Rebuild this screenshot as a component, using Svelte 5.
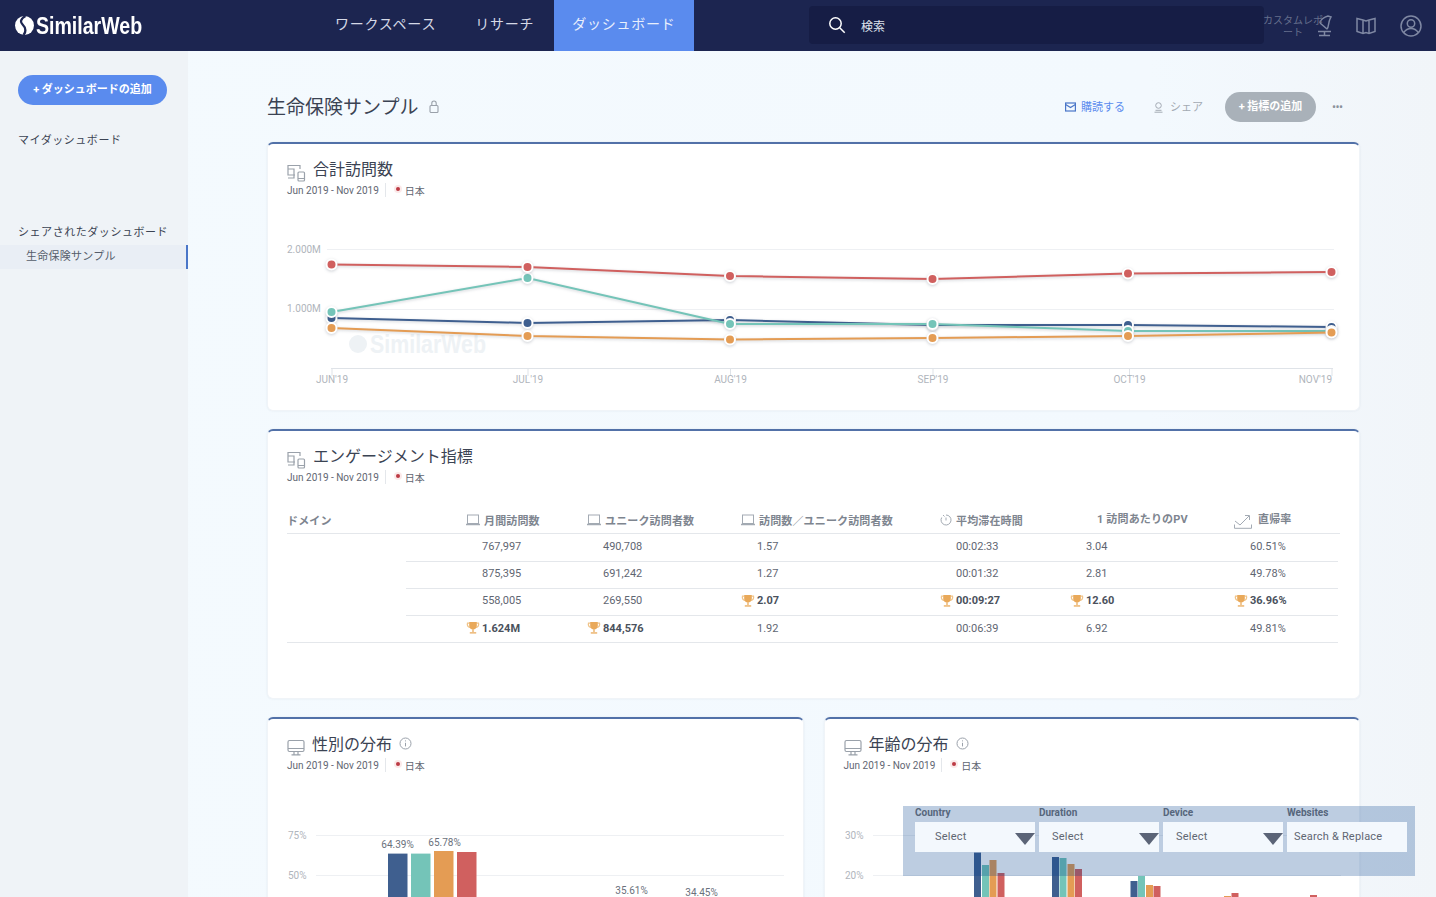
<script>
  const xs = [331.5, 527.5, 730, 932.5, 1128, 1331.5]
  const series = [
    { c: '#3f5f8f', y: [318, 323, 320, 325, 325, 327] },
    { c: '#74c4b8', y: [312, 278, 324, 324, 331, 331] },
    { c: '#d0605f', y: [264.5, 267, 276, 279, 273.5, 272] },
    { c: '#e49c54', y: [328, 336, 339.5, 338, 336, 332.5] }
  ]
  const months = ["JUN'19", "JUL'19", "AUG'19", "SEP'19", "OCT'19", "NOV'19"]
  const monthAt = [332, 528, 730.5, 933, 1129.5]
  const cols = [
    { label: '月間訪問数', icon: 'lap' },
    { label: 'ユニーク訪問者数', icon: 'lap' },
    { label: '訪問数／ユニーク訪問者数', icon: 'lap' },
    { label: '平均滞在時間', icon: 'clock' },
    { label: '1 訪問あたりのPV', icon: '' },
    { label: '直帰率', icon: 'bounce' }
  ]
  // a leading * marks the winner of the column
  const rows = [
    ['767,997', '490,708', '1.57', '00:02:33', '3.04', '60.51%'],
    ['875,395', '691,242', '1.27', '00:01:32', '2.81', '49.78%'],
    ['558,005', '269,550', '*2.07', '*00:09:27', '*12.60', '*36.96%'],
    ['*1.624M', '*844,576', '1.92', '00:06:39', '6.92', '49.81%']
  ]
  const genderBars = [
    [388, 853.6, '#3f5f8f'], [411, 853.6, '#74c4b8'], [434, 851, '#e49c54'], [457, 852, '#d0605f']
  ]
  const ageBars = [
    [973, 852.6, '#3f5f8f'], [981, 865, '#74c4b8'], [988.5, 860, '#e49c54'], [996.5, 873, '#d0605f'],
    [1051, 857, '#3f5f8f'], [1058.5, 858, '#74c4b8'], [1066.5, 864, '#e49c54'], [1074, 869, '#d0605f'],
    [1129.5, 881, '#3f5f8f'], [1137, 876, '#74c4b8'], [1145, 885, '#e49c54'], [1152.5, 886, '#d0605f'],
    [1223, 896, '#e49c54'], [1230.5, 893, '#d0605f'], [1309, 895, '#d0605f']
  ]
  const filters = [
    { label: 'Country', text: 'Select', arrow: true, pad: 20 },
    { label: 'Duration', text: 'Select', arrow: true, pad: 13 },
    { label: 'Device', text: 'Select', arrow: true, pad: 13 },
    { label: 'Websites', text: 'Search & Replace', arrow: false, pad: 7 }
  ]
</script>

{#snippet mark(size, color, cut)}
  <svg class="mark" width={size} height={size} viewBox="0 0 20 20">
    <circle cx="10" cy="10" r="10" fill={color} />
    <path d="M11 0C6 3 5 6 8 9c3 3 4 7 1 11" fill="none" stroke={cut} stroke-width="2.4" />
  </svg>
{/snippet}

{#snippet devices()}
  <svg class="ticon" width="19" height="18" viewBox="0 0 19 18" fill="none" stroke="#9aa1aa" stroke-width="1.2">
    <path d="M13 5V1.5H1V11h7" />
    <path d="M1 5h6v9H1" />
    <rect x="11" y="8" width="6.5" height="9" rx="1" />
    <path d="M11 14.5h6.5" />
  </svg>
{/snippet}

{#snippet desktop()}
  <svg class="ticon" width="18" height="17" viewBox="0 0 18 17" fill="none" stroke="#9aa1aa" stroke-width="1.2">
    <rect x="1" y="1.5" width="16" height="11" rx="1.5" />
    <path d="M1 9.5h16M7 12.5v3M11 12.5v3M4.5 15.8h9" />
  </svg>
{/snippet}

{#snippet meta()}
  <div class="meta">
    <span>Jun 2019 - Nov 2019</span>
    <i class="sep"></i>
    <i class="dot"></i>
    <span>日本</span>
  </div>
{/snippet}

{#snippet info()}
  <svg width="13" height="13" viewBox="0 0 13 13" fill="none" stroke="#9aa1aa">
    <circle cx="6.5" cy="6.5" r="5.5" />
    <path d="M6.5 5.8v3.6M6.5 3.4v1" />
  </svg>
{/snippet}

{#snippet trophy()}
  <svg class="trophy" width="14" height="14" viewBox="0 0 14 14">
    <path d="M3.500 2.200H1.500c-.6 2.400.6 4 2.500 4.200M10.500 2.200h2c.6 2.400-.6 4-2.500 4.200" fill="none" stroke="#f0c48a" stroke-width="1.300" />
    <path d="M3.200 1h7.600v3.500c0 2.400-1.600 4-3.800 4s-3.800-1.600-3.800-4z" fill="#e9a95a" />
    <path d="M6.200 8h1.600v3H6.200z" fill="#eebb7c" />
    <path d="M3.800 11.300h6.400v1.300H3.800z" fill="#e9a95a" />
  </svg>
{/snippet}

<div class="page">
  <header>
    <div class="logo">
      {@render mark(19, '#fff', '#1c2550')}
      <span>SimilarWeb</span>
    </div>
    <nav>
      <a href="#w">ワークスペース</a>
      <a href="#r">リサーチ</a>
      <a href="#d" class="on">ダッシュボード</a>
    </nav>
    <div class="search">
      <svg width="18" height="18" viewBox="0 0 18 18" fill="none" stroke="#fff" stroke-width="1.5">
        <circle cx="7.500" cy="7.500" r="5.700" />
        <path d="M11.700 11.700l5 5" />
      </svg>
      <span>検索</span>
    </div>
    <div class="tools">
      <span class="custom">カスタムレポート</span>
      <svg class="t1" width="18" height="22" viewBox="0 0 18 22" fill="none" stroke="#7f88a3" stroke-width="1.500">
        <path d="M3 20.500h11M8.500 20.500v-4M2 16.500h13M4 8l7 6M4 8c0-3 4-6 8-7l3 1-1 2M14 4c-2 4-1 8-3 10" />
      </svg>
      <svg class="t2" width="20" height="18" viewBox="0 0 20 18" fill="none" stroke="#7f88a3" stroke-width="1.500">
        <path d="M1 1.500l6 1.500 3 1 3-1 6-1.500v13l-6 2-3-1-3 1-6-2zM7 3v13.500M13 3v13.500" />
      </svg>
      <svg class="t3" width="22" height="22" viewBox="0 0 22 22" fill="none" stroke="#7f88a3" stroke-width="1.500">
        <circle cx="11" cy="11" r="10" />
        <circle cx="11" cy="8.500" r="3.700" />
        <path d="M3.800 17.500c2-3 4.500-4 7.200-4s5.200 1 7.200 4" />
      </svg>
    </div>
  </header>

  <div class="body">
    <aside>
      <button class="add">+ ダッシュボードの追加</button>
      <div class="side-title">マイダッシュボード</div>
      <div class="side-title shared">シェアされたダッシュボード</div>
      <div class="side-item">生命保険サンプル</div>
    </aside>

    <main>
      <div class="top">
        <h1>生命保険サンプル</h1>
        <svg class="lock" width="10" height="13" viewBox="0 0 10 13" fill="none" stroke="#9aa1aa" stroke-width="1.100">
          <rect x="1" y="5.500" width="8" height="7" rx="1" />
          <path d="M2.800 5.500V3.200a2.200 2.200 0 0 1 4.400 0v2.300" />
        </svg>
        <div class="actions">
          <span class="act blue">
            <svg width="11" height="10" viewBox="0 0 11 10" fill="none" stroke="#4a76c8" stroke-width="1.200">
              <rect x="0.600" y="1" width="9.800" height="8" />
              <path d="M0.600 2.500l4.900 3 4.900-3" />
            </svg>
            購読する
          </span>
          <span class="act grey">
            <svg width="9" height="11" viewBox="0 0 9 11" fill="none" stroke="#a3aab3">
              <circle cx="4.500" cy="3.500" r="2.800" />
              <path d="M0.500 10.200h8M1.500 8.300h6" />
            </svg>
            シェア
          </span>
          <button class="metric">+ 指標の追加</button>
          <span class="more">•••</span>
        </div>
      </div>

      <section class="card c1">
        <div class="head">
          <div class="title">{@render devices()}<h2>合計訪問数</h2></div>
          {@render meta()}
        </div>
        <svg class="chart" width="1091" height="204" viewBox="268 204 1091 204">
          <line class="grid" x1="327" x2="1334" y1="249.500" y2="249.500" />
          <line class="grid" x1="327" x2="1334" y1="309.500" y2="309.500" />
          <line class="axis" x1="331" x2="1333" y1="368.500" y2="368.500" />
          {#each [...monthAt, 1332] as x}
            <line class="axis" x1={x} x2={x} y1="368.500" y2="376" />
          {/each}
          <text class="tick" x="287" y="253">2.000M</text>
          <text class="tick" x="287" y="312">1.000M</text>
          {#each monthAt as x, i}
            <text class="tick" {x} y="383" text-anchor="middle">{months[i]}</text>
          {/each}
          <text class="tick" x="1332" y="383" text-anchor="end">{months[5]}</text>
          <text class="water" x="370" y="353" textLength="116" lengthAdjust="spacingAndGlyphs">SimilarWeb</text>
          <circle cx="358" cy="344" r="9" fill="#eef2f5" />
          {#each series as s}
            <g class="lines">
              <polyline points={xs.map((x, i) => `${x},${s.y[i]}`).join(' ')} fill="none" stroke={s.c} stroke-width="2" />
              {#each xs as x, i}
                <circle cx={x} cy={s.y[i]} r="5" fill={s.c} stroke="#fff" stroke-width="2" />
              {/each}
            </g>
          {/each}
        </svg>
      </section>

      <section class="card c2">
        <div class="head">
          <div class="title">{@render devices()}<h2>エンゲージメント指標</h2></div>
          {@render meta()}
        </div>
        <div class="table">
          <div class="tr th">
            <div class="dom">ドメイン</div>
            {#each cols as c, i}
              <div class="hcell h{i}">
                {#if c.icon === 'lap'}
                  <svg width="14" height="12" viewBox="0 0 14 12" fill="none" stroke="#a3aab3">
                    <rect x="1.500" y="1" width="11" height="8.500" />
                    <path d="M0 10.500h14" stroke-width="1.500" />
                  </svg>
                {:else if c.icon === 'clock'}
                  <svg width="12" height="12" viewBox="0 0 12 12" fill="none" stroke="#a3aab3">
                    <path d="M6 1a5 5 0 1 1-4.300 2.500M6 3.500V6.500M3 1l1.500 1.500" />
                  </svg>
                {:else if c.icon === 'bounce'}
                  <svg width="18" height="15" viewBox="0 0 18 15" fill="none" stroke="#a3aab3">
                    <path d="M1 7l5 4 9-9M11 1.500h4.500V6M.5 10.500v3.800h17v-3.800" />
                  </svg>
                {/if}
                <span>{c.label}</span>
              </div>
            {/each}
          </div>
          {#each rows as row, r}
            <div class="tr" class:first={r === 0} class:last={r === 3}>
              <div class="dom"><i></i></div>
              {#each row as v}
                <div class="cell" class:win={v[0] === '*'}>
                  {#if v[0] === '*'}{@render trophy()}{/if}
                  <span>{v.replace('*', '')}</span>
                </div>
              {/each}
            </div>
          {/each}
        </div>
      </section>

      <div class="pair">
        <section class="card c3">
          <div class="head">
            <div class="title">{@render desktop()}<h2>性別の分布</h2>{@render info()}</div>
            {@render meta()}
          </div>
          <svg class="chart" width="534" height="118" viewBox="268 779 534 118">
            <line class="grid" x1="316" x2="784" y1="835.500" y2="835.500" />
            <line class="grid" x1="316" x2="784" y1="875.500" y2="875.500" />
            <text class="tick" x="288" y="839">75%</text>
            <text class="tick" x="288" y="879">50%</text>
            {#each genderBars as b}
              <rect x={b[0]} y={b[1]} width="19.500" height="60" fill={b[2]} />
            {/each}
            <text class="val" x="397.500" y="848" text-anchor="middle">64.39%</text>
            <text class="val" x="444.500" y="846" text-anchor="middle">65.78%</text>
            <text class="val" x="631.500" y="894" text-anchor="middle">35.61%</text>
            <text class="val" x="701.500" y="896" text-anchor="middle">34.45%</text>
          </svg>
        </section>
        <section class="card c3">
          <div class="head">
            <div class="title">{@render desktop()}<h2>年齢の分布</h2>{@render info()}</div>
            {@render meta()}
          </div>
          <svg class="chart" width="535" height="118" viewBox="824 779 535 118">
            <line class="grid" x1="872" x2="1340" y1="835.500" y2="835.500" />
            <line class="grid" x1="872" x2="1340" y1="875.500" y2="875.500" />
            <text class="tick" x="844" y="839">30%</text>
            <text class="tick" x="844" y="879">20%</text>
            {#each ageBars as b}
              <rect x={b[0]} y={b[1]} width="7" height="60" fill={b[2]} />
            {/each}
          </svg>
        </section>
      </div>
    </main>
  </div>

  <div class="overlay">
    {#each filters as f}
      <div class="filter">
        <label for={f.label}>{f.label}</label>
        <div class="select" id={f.label} style="padding-left:{f.pad}px">
          {f.text}
          {#if f.arrow}<i class="arrow"></i>{/if}
        </div>
      </div>
    {/each}
  </div>
</div>

<style>
  :global(body) {
    margin: 0;
    font-family: Roboto, "Noto Sans CJK JP", sans-serif;
    color: #3b4353;
  }
  .page {
    position: relative;
    height: 897px;
    overflow: hidden;
    background: linear-gradient(90deg, #f4fafe 0%, #f3f9fe 80%, #f1f5f9 100%);
  }
  header {
    height: 51px;
    background: #1c2550;
    display: flex;
    align-items: center;
    position: relative;
  }
  .logo {
    width: 302px;
    padding-left: 15px;
    box-sizing: border-box;
    display: flex;
    align-items: center;
    gap: 2px;
    color: #fff;
    font: 700 24px "Liberation Sans", sans-serif;
  }
  .logo span {
    display: inline-block;
    transform: scaleX(0.815);
    transform-origin: left center;
  }
  nav {
    display: flex;
    height: 51px;
    align-items: stretch;
    margin-left: 13.500px;
  }
  nav a {
    color: #d5d9e6;
    text-decoration: none;
    font-size: 14px;
    letter-spacing: 0.75px;
    display: flex;
    align-items: center;
    padding: 0 19.500px 5px;
    box-sizing: border-box;
  }
  nav a.on {
    background: #5a8bee;
    color: #e8effc;
    padding: 0 18.500px 5px;
  }
  .search {
    margin-left: 115px;
    width: 455px;
    height: 38px;
    margin-top: -1px;
    box-sizing: border-box;
    background: #161d45;
    border-radius: 4px;
    display: flex;
    align-items: center;
    gap: 15px;
    padding-left: 19px;
    color: #dfe3ec;
    font-size: 12px;
  }
  .tools {
    flex: 1;
    display: flex;
    align-items: center;
    padding-left: 52px;
    position: relative;
  }
  .custom {
    position: absolute;
    left: -1px;
    top: 0;
    width: 60px;
    font-size: 10px;
    line-height: 12px;
    text-align: center;
    color: #666f8c;
    word-break: break-all;
  }
  .t2 {
    margin-left: 22px;
  }
  .t3 {
    margin-left: 24px;
  }
  .body {
    display: flex;
    height: 846px;
  }
  aside {
    width: 188px;
    flex: none;
    background: #eff3f7;
    padding-top: 24px;
    box-sizing: border-box;
  }
  .add {
    display: block;
    margin-left: 18px;
    width: 149px;
    height: 30px;
    border: 0;
    border-radius: 15px;
    background: #5a8bee;
    color: #fff;
    font: 700 11px Roboto, "Noto Sans CJK JP", sans-serif;
    padding: 0 0 4px;
  }
  .side-title {
    margin: 27px 0 0 18px;
    font-size: 11px;
    line-height: 17px;
    letter-spacing: 0.55px;
    color: #3b4353;
  }
  .side-title.shared {
    margin-top: 75px;
  }
  .side-item {
    margin-top: 4px;
    height: 24px;
    line-height: 24px;
    padding-left: 26px;
    font-size: 11px;
    letter-spacing: 0.25px;
    color: #555d6b;
    background: #e9eef5;
    border-right: 2px solid #4a76c8;
  }
  main {
    flex: 1;
    padding-left: 79px;
    padding-right: 76px;
    min-width: 0;
  }
  .top {
    display: flex;
    align-items: center;
    height: 91px;
    padding-top: 16px;
    box-sizing: border-box;
  }
  h1 {
    margin: 0 11px 0 0;
    font-size: 19px;
    font-weight: 400;
    color: #3b4353;
    position: relative;
    top: 1px;
  }
  .lock {
    margin-top: 3px;
  }
  .actions {
    margin-left: auto;
    display: flex;
    align-items: center;
    font-size: 11px;
    padding-right: 15px;
    padding-top: 4px;
  }
  .act {
    display: flex;
    align-items: center;
    gap: 5px;
    margin-top: -2px;
  }
  .act svg {
    margin-top: 3px;
  }
  .blue {
    color: #5a8bee;
  }
  .grey {
    color: #a3aab3;
    margin-left: 29px;
    gap: 7px;
  }
  .metric {
    margin-left: 22px;
    width: 91px;
    height: 30px;
    border: 0;
    border-radius: 15px;
    background: #a9b1b9;
    color: #fff;
    font: 700 11px Roboto, "Noto Sans CJK JP", sans-serif;
    padding: 0 0 4px;
  }
  .more {
    margin-left: 16px;
    width: 13px;
    font-size: 12px;
    letter-spacing: -0.5px;
    color: #8a929c;
    white-space: nowrap;
  }
  .card {
    background: #fff;
    box-sizing: border-box;
    border: 1px solid #f0f4f8;
    border-top: 2px solid #5271a8;
    border-radius: 6px;
    box-shadow: 0 0 2px rgba(90, 110, 140, 0.12);
    margin-bottom: 18px;
    overflow: hidden;
  }
  .c1 {
    height: 269px;
  }
  .c2 {
    height: 270px;
  }
  .c3 {
    flex: 1;
    height: 260px;
    margin-bottom: 0;
  }
  .pair {
    display: flex;
    gap: 20px;
  }
  .head {
    height: 60px;
    padding: 14px 19px 0;
    box-sizing: border-box;
  }
  .title {
    display: flex;
    align-items: center;
    height: 20px;
    gap: 7px;
  }
  .ticon {
    margin-top: 9px;
    flex: none;
  }
  h2 {
    margin: 0;
    font-size: 16px;
    font-weight: 400;
    color: #3b4353;
  }
  .meta {
    display: flex;
    align-items: center;
    font-size: 10px;
    color: #5f6672;
    height: 14px;
    margin-top: 5px;
  }
  .sep {
    width: 1px;
    height: 14px;
    background: #e4e7eb;
    margin: 0 8px 0 6px;
  }
  .dot {
    width: 4px;
    height: 4px;
    border-radius: 50%;
    background: #bc3a44;
    box-shadow: 0 0 0 2px #fbe9e9;
    margin: 0 5px 0 2px;
    position: relative;
    top: -1px;
  }
  .chart {
    display: block;
  }
  .grid {
    stroke: #eef0f3;
  }
  .axis {
    stroke: #dfe3e8;
  }
  .tick {
    font-size: 10px;
    fill: #b0b5bc;
  }
  .val {
    font-size: 10px;
    fill: #6a717c;
  }
  .water {
    font: 700 26px "Liberation Sans", sans-serif;
    fill: #eef2f5;
  }
  .lines {
    filter: drop-shadow(0 1px 1.500px rgba(60, 70, 90, 0.25));
  }
  .table {
    margin: 15px 19px 0;
    font-size: 11px;
    color: #5f6672;
  }
  .tr {
    display: grid;
    grid-template-columns: 179px 121px 154px 199px 130px 164px 104px;
    height: 27px;
  }
  .tr.first {
    height: 28px;
  }
  .th {
    height: 28px;
    border-bottom: 1px solid #e4e7eb;
    box-sizing: border-box;
    font-weight: 700;
    color: #7e858f;
    align-items: center;
    letter-spacing: 0.15px;
  }
  .hcell {
    display: flex;
    align-items: center;
    gap: 4px;
    white-space: nowrap;
  }
  .h4 {
    padding-left: 27px;
    margin-top: -3px;
  }
  .h5 {
    gap: 6px;
    margin-top: -3px;
  }
  .h5 svg {
    margin-top: 6px;
  }
  .dom {
    display: flex;
    justify-content: flex-end;
  }
  .th .dom {
    justify-content: flex-start;
  }
  .dom i {
    width: 60px;
    border-bottom: 1px solid #e4e7eb;
  }
  .last .dom i {
    width: 100%;
  }
  .cell {
    border-bottom: 1px solid #e4e7eb;
    display: flex;
    align-items: center;
    padding-left: 16px;
    padding-bottom: 3px;
    position: relative;
  }
  .last .cell {
    padding-bottom: 1px;
  }
  .win {
    font-weight: 700;
    color: #4a515c;
  }
  .trophy {
    position: absolute;
    left: 0;
    top: 5px;
  }
  .overlay {
    position: absolute;
    left: 903px;
    top: 806px;
    width: 512px;
    height: 70px;
    box-sizing: border-box;
    background: rgba(0, 62, 140, 0.26);
    padding: 0 8px 0 12px;
    display: flex;
    gap: 4px;
  }
  .filter {
    width: 120px;
  }
  label {
    display: block;
    font-size: 10px;
    font-weight: 700;
    line-height: 14px;
    color: #56667c;
  }
  .select {
    margin-top: 2px;
    height: 30px;
    box-sizing: border-box;
    background: #f3f8fd;
    font-size: 11px;
    line-height: 29px;
    color: #5f6672;
    position: relative;
    letter-spacing: 0.2px;
  }
  .arrow {
    position: absolute;
    right: 0;
    top: 11px;
    width: 0;
    height: 0;
    border-left: 10px solid transparent;
    border-right: 10px solid transparent;
    border-top: 12px solid #5b6477;
  }
</style>
